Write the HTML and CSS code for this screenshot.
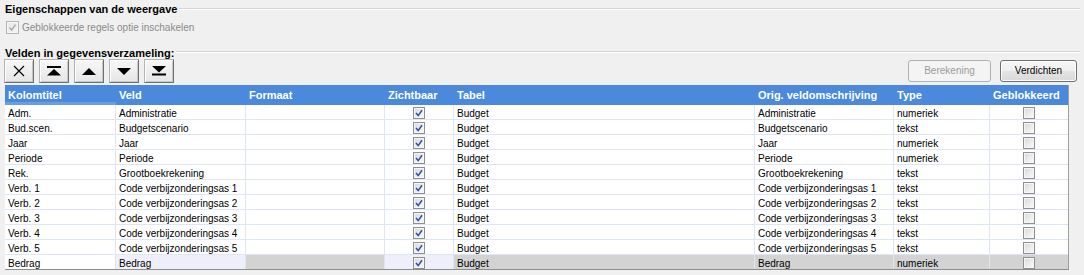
FILE: index.html
```html
<!DOCTYPE html>
<html lang="nl">
<head>
<meta charset="utf-8">
<title>Eigenschappen van de weergave</title>
<link rel="stylesheet" href="styles.css">
</head>
<body>
<div class="page">
  <div class="group-title first"><span class="gt-text">Eigenschappen van de weergave</span><span class="rule"></span></div>
  <div class="check-row">
    <span class="cb cb-disabled"><svg viewBox="0 0 11 11" width="11" height="11"><path d="M2.5 5.5 L4.6 8 L8.6 2.6" fill="none" stroke="#a9a9a9" stroke-width="1.5"/></svg></span>
    <span class="check-label">Geblokkeerde regels optie inschakelen</span>
  </div>
  <div class="group-title second"><span class="gt-text">Velden in gegevensverzameling:</span><span class="rule"></span></div>
  <div class="toolbar">
    <div class="tools">
      <button class="tbtn" type="button"><svg width="12" height="12" viewBox="0 0 12 12"><path d="M1 1 L11 11 M11 1 L1 11" stroke="#000" stroke-width="1.2"/></svg></button>
      <button class="tbtn" type="button"><svg width="14" height="10" viewBox="0 0 14 10"><rect x="0" y="0" width="14" height="2" fill="#000"/><polygon points="7,3 14,9.5 0,9.5" fill="#000"/></svg></button>
      <button class="tbtn" type="button"><svg width="14" height="7" viewBox="0 0 14 7"><polygon points="7,0 14,7 0,7" fill="#000"/></svg></button>
      <button class="tbtn" type="button"><svg width="14" height="7" viewBox="0 0 14 7"><polygon points="0,0 14,0 7,7" fill="#000"/></svg></button>
      <button class="tbtn" type="button"><svg width="14" height="10" viewBox="0 0 14 10"><polygon points="0,0 14,0 7,6.5" fill="#000"/><rect x="0" y="7.5" width="14" height="2" fill="#000"/></svg></button>
    </div>
    <div class="actions">
      <button class="abtn abtn-disabled" type="button">Berekening</button>
      <button class="abtn abtn-verdichten" type="button">Verdichten</button>
    </div>
  </div>
  <div class="grid">
    <div class="row head">
      <div class="cell h1">Kolomtitel</div><div class="cell">Veld</div><div class="cell">Formaat</div><div class="cell">Zichtbaar</div><div class="cell">Tabel</div><div class="cell">Orig. veldomschrijving</div><div class="cell">Type</div><div class="cell">Geblokkeerd</div>
    </div>
    <div class="row"><div class="cell">Adm.</div><div class="cell">Administratie</div><div class="cell"></div><div class="cell c"><span class="cb cb-on"><svg viewBox="0 0 10 10" width="10" height="10"><path d="M2 5 L4.2 7.6 L8 2.2" fill="none" stroke="#2e4fa3" stroke-width="1.5"/></svg></span></div><div class="cell">Budget</div><div class="cell">Administratie</div><div class="cell">numeriek</div><div class="cell c"><span class="cb cb-off"></span></div></div>
    <div class="row"><div class="cell">Bud.scen.</div><div class="cell">Budgetscenario</div><div class="cell"></div><div class="cell c"><span class="cb cb-on"><svg viewBox="0 0 10 10" width="10" height="10"><path d="M2 5 L4.2 7.6 L8 2.2" fill="none" stroke="#2e4fa3" stroke-width="1.5"/></svg></span></div><div class="cell">Budget</div><div class="cell">Budgetscenario</div><div class="cell">tekst</div><div class="cell c"><span class="cb cb-off"></span></div></div>
    <div class="row"><div class="cell">Jaar</div><div class="cell">Jaar</div><div class="cell"></div><div class="cell c"><span class="cb cb-on"><svg viewBox="0 0 10 10" width="10" height="10"><path d="M2 5 L4.2 7.6 L8 2.2" fill="none" stroke="#2e4fa3" stroke-width="1.5"/></svg></span></div><div class="cell">Budget</div><div class="cell">Jaar</div><div class="cell">numeriek</div><div class="cell c"><span class="cb cb-off"></span></div></div>
    <div class="row"><div class="cell">Periode</div><div class="cell">Periode</div><div class="cell"></div><div class="cell c"><span class="cb cb-on"><svg viewBox="0 0 10 10" width="10" height="10"><path d="M2 5 L4.2 7.6 L8 2.2" fill="none" stroke="#2e4fa3" stroke-width="1.5"/></svg></span></div><div class="cell">Budget</div><div class="cell">Periode</div><div class="cell">numeriek</div><div class="cell c"><span class="cb cb-off"></span></div></div>
    <div class="row"><div class="cell">Rek.</div><div class="cell">Grootboekrekening</div><div class="cell"></div><div class="cell c"><span class="cb cb-on"><svg viewBox="0 0 10 10" width="10" height="10"><path d="M2 5 L4.2 7.6 L8 2.2" fill="none" stroke="#2e4fa3" stroke-width="1.5"/></svg></span></div><div class="cell">Budget</div><div class="cell">Grootboekrekening</div><div class="cell">tekst</div><div class="cell c"><span class="cb cb-off"></span></div></div>
    <div class="row"><div class="cell">Verb. 1</div><div class="cell">Code verbijzonderingsas 1</div><div class="cell"></div><div class="cell c"><span class="cb cb-on"><svg viewBox="0 0 10 10" width="10" height="10"><path d="M2 5 L4.2 7.6 L8 2.2" fill="none" stroke="#2e4fa3" stroke-width="1.5"/></svg></span></div><div class="cell">Budget</div><div class="cell">Code verbijzonderingsas 1</div><div class="cell">tekst</div><div class="cell c"><span class="cb cb-off"></span></div></div>
    <div class="row"><div class="cell">Verb. 2</div><div class="cell">Code verbijzonderingsas 2</div><div class="cell"></div><div class="cell c"><span class="cb cb-on"><svg viewBox="0 0 10 10" width="10" height="10"><path d="M2 5 L4.2 7.6 L8 2.2" fill="none" stroke="#2e4fa3" stroke-width="1.5"/></svg></span></div><div class="cell">Budget</div><div class="cell">Code verbijzonderingsas 2</div><div class="cell">tekst</div><div class="cell c"><span class="cb cb-off"></span></div></div>
    <div class="row"><div class="cell">Verb. 3</div><div class="cell">Code verbijzonderingsas 3</div><div class="cell"></div><div class="cell c"><span class="cb cb-on"><svg viewBox="0 0 10 10" width="10" height="10"><path d="M2 5 L4.2 7.6 L8 2.2" fill="none" stroke="#2e4fa3" stroke-width="1.5"/></svg></span></div><div class="cell">Budget</div><div class="cell">Code verbijzonderingsas 3</div><div class="cell">tekst</div><div class="cell c"><span class="cb cb-off"></span></div></div>
    <div class="row"><div class="cell">Verb. 4</div><div class="cell">Code verbijzonderingsas 4</div><div class="cell"></div><div class="cell c"><span class="cb cb-on"><svg viewBox="0 0 10 10" width="10" height="10"><path d="M2 5 L4.2 7.6 L8 2.2" fill="none" stroke="#2e4fa3" stroke-width="1.5"/></svg></span></div><div class="cell">Budget</div><div class="cell">Code verbijzonderingsas 4</div><div class="cell">tekst</div><div class="cell c"><span class="cb cb-off"></span></div></div>
    <div class="row"><div class="cell">Verb. 5</div><div class="cell">Code verbijzonderingsas 5</div><div class="cell"></div><div class="cell c"><span class="cb cb-on"><svg viewBox="0 0 10 10" width="10" height="10"><path d="M2 5 L4.2 7.6 L8 2.2" fill="none" stroke="#2e4fa3" stroke-width="1.5"/></svg></span></div><div class="cell">Budget</div><div class="cell">Code verbijzonderingsas 5</div><div class="cell">tekst</div><div class="cell c"><span class="cb cb-off"></span></div></div>
    <div class="row sel"><div class="cell s-white">Bedrag</div><div class="cell s-lav">Bedrag</div><div class="cell s-grey"></div><div class="cell c s-lav"><span class="cb cb-on"><svg viewBox="0 0 10 10" width="10" height="10"><path d="M2 5 L4.2 7.6 L8 2.2" fill="none" stroke="#2e4fa3" stroke-width="1.5"/></svg></span></div><div class="cell s-grey">Budget</div><div class="cell s-grey">Bedrag</div><div class="cell s-grey">numeriek</div><div class="cell c s-grey"><span class="cb cb-off"></span></div></div>
  </div>
</div>
</body>
</html>
```

FILE: styles.css
```css
* { box-sizing: border-box; }

html, body {
  margin: 0;
  padding: 0;
  background: #f0f0f0;
}

body {
  font-family: "Liberation Sans", Arial, sans-serif;
  font-size: 10px;
  color: #000;
}

.page {
  width: 1084px;
  height: 275px;
  padding: 3px 4px 0 4px;
  overflow: hidden;
}

.group-title {
  display: flex;
  align-items: flex-start;
  margin-left: 1px;
  height: 12px;
}

.group-title.second {
  margin-top: 13px;
}

.gt-text {
  font-weight: bold;
  font-size: 11px;
  line-height: 12px;
  white-space: nowrap;
  padding-right: 2px;
}

.rule {
  flex: 1;
  height: 2px;
  margin-top: 5px;
  border-top: 1px solid #d5d5d5;
  border-bottom: 1px solid #ffffff;
}

.group-title.second .rule {
  margin-top: 4px;
}

.check-row {
  display: flex;
  align-items: center;
  height: 13px;
  margin-top: 6px;
  margin-left: 2px;
  gap: 3px;
}

.check-label {
  color: #8a8a8a;
  line-height: 13px;
  white-space: nowrap;
}

.cb {
  display: inline-flex;
  align-items: center;
  justify-content: center;
  width: 12px;
  height: 12px;
  border: 1px solid #8e8f8f;
  background: linear-gradient(135deg, #d6d6d6 0%, #ececec 55%, #fbfbfb 100%);
  box-shadow: inset 0 0 0 1px #f6f6f6;
}

.cb-disabled {
  width: 13px;
  height: 13px;
  border-color: #b5b5b5;
  background: linear-gradient(135deg, #e6e6e6 0%, #f5f5f5 100%);
}

.cb svg { display: block; }

.toolbar {
  display: flex;
  justify-content: space-between;
  align-items: center;
  height: 24px;
  margin-top: 0;
}

.tools {
  display: flex;
  gap: 5px;
}

.tbtn {
  width: 30px;
  height: 24px;
  padding: 0;
  margin: 0;
  display: flex;
  align-items: center;
  justify-content: center;
  border: 1px solid;
  border-color: #b4b4b4 #6f6f6f #6f6f6f #b4b4b4;
  background: linear-gradient(#f7f7f7, #e6e6e6);
  box-shadow: inset 1px 1px 0 #ffffff, inset -1px -1px 0 #c8c8c8;
}

.tbtn svg { display: block; }

.actions {
  display: flex;
  gap: 9px;
  margin-right: 3px;
}

.abtn {
  height: 22px;
  padding: 0;
  margin: 0;
  font-family: "Liberation Sans", Arial, sans-serif;
  font-size: 10px;
  border-radius: 3px;
  line-height: 20px;
}

.abtn-disabled {
  width: 83px;
  color: #9b9b9b;
  border: 1px solid #adb2b5;
  background: #f4f4f4;
}

.abtn-verdichten {
  width: 77px;
  color: #000;
  border: 1px solid #707070;
  background: linear-gradient(#f6f6f6 0%, #efefef 50%, #e4e4e4 51%, #d9d9d9 100%);
  box-shadow: inset 0 0 0 1px #fcfcfc;
}

.grid {
  margin-top: 2px;
  margin-left: 1px;
  width: 1064px;
  background: #ffffff;
  border-right: 1px solid #9d9d9d;
  border-bottom: 1px solid #8c8c8c;
}

.row {
  display: grid;
  grid-template-columns: 111px 130px 139px 69px 301px 139px 96px 78px;
  height: 15px;
}

.row .cell {
  border-right: 1px solid #dfe6f3;
  border-bottom: 1px solid #dfe6f3;
  padding: 3px 0 0 3px;
  line-height: 11px;
  white-space: nowrap;
  overflow: hidden;
}

.row .cell:last-child {
  border-right: none;
}

.row .cell.c {
  padding: 2px 0 0 0;
  display: flex;
  justify-content: center;
  align-items: flex-start;
}

.row.head {
  height: 20px;
  background: #4a89db;
}

.row.head .cell {
  border: none;
  color: #ffffff;
  font-weight: bold;
  font-size: 11px;
  line-height: 20px;
  padding: 0 0 0 3px;
}

.row.head .cell.h1 {
  box-shadow: inset 0 -3px 0 #6a9de2;
}

.row.sel .cell {
  border-bottom-color: #d3d3d3;
}

.row.sel:last-child .cell { border-bottom: none; }
.row.sel { height: 14px; }

.s-white { background: #ffffff; }
.s-lav { background: #efeffb; }
.s-grey { background: #d3d3d3; }
```
